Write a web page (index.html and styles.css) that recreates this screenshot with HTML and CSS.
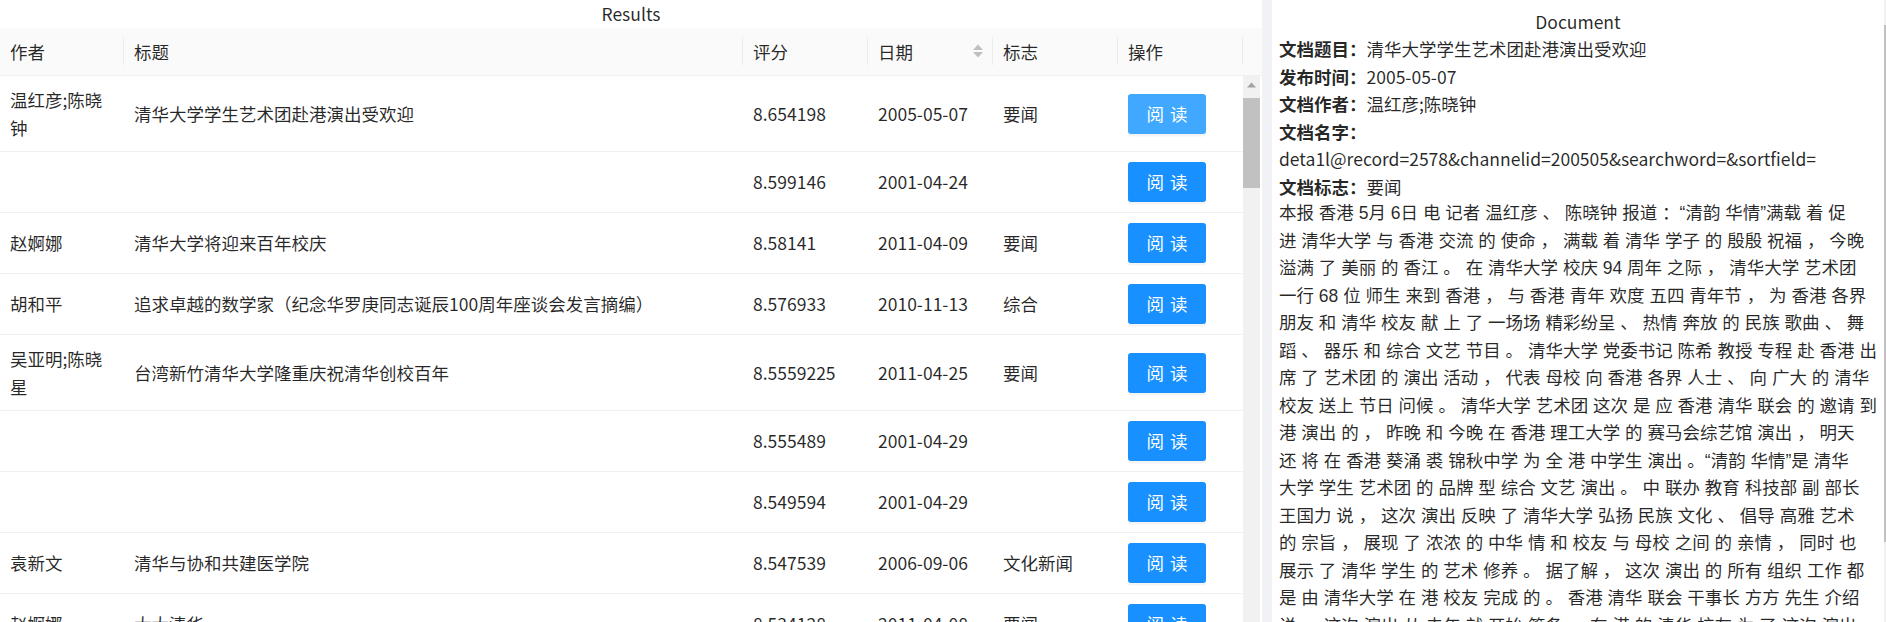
FILE: index.html
```html
<!DOCTYPE html>
<html lang="zh-CN">
<head>
<meta charset="utf-8">
<title>Results</title>
<link rel="stylesheet" href="styles.css">
</head>
<body>
<section class="results">
  <div class="panel-title">Results</div>
  <table class="thead">
    <colgroup><col class="c-author"><col class="c-title"><col class="c-std"><col class="c-std"><col class="c-std"><col class="c-std"><col></colgroup>
    <thead>
      <tr>
        <th class="sep">作者</th>
        <th class="sep">标题</th>
        <th class="sep">评分</th>
        <th class="sep"><div class="sorter"><span>日期</span>
          <svg class="carets" width="12" height="16" viewBox="0 0 12 16"><path d="M1 7 L6 1.6 L11 7 Z" fill="#bfbfbf"/><path d="M1 9 L6 14.4 L11 9 Z" fill="#bfbfbf"/></svg></div></th>
        <th class="sep">标志</th>
        <th class="sep">操作</th>
        <th></th>
      </tr>
    </thead>
  </table>
  <div class="tbody-wrap">
    <table class="tbody">
      <colgroup><col class="c-author"><col class="c-title"><col class="c-std"><col class="c-std"><col class="c-std"><col class="c-std"></colgroup>
      <tbody>
        <tr><td>温红彦;陈晓钟</td><td>清华大学学生艺术团赴港演出受欢迎</td><td>8.654198</td><td>2005-05-07</td><td>要闻</td><td><button class="btn hover"><span>阅读</span></button></td></tr>
        <tr><td></td><td></td><td>8.599146</td><td>2001-04-24</td><td></td><td><button class="btn"><span>阅读</span></button></td></tr>
        <tr><td>赵婀娜</td><td>清华大学将迎来百年校庆</td><td>8.58141</td><td>2011-04-09</td><td>要闻</td><td><button class="btn"><span>阅读</span></button></td></tr>
        <tr><td>胡和平</td><td>追求卓越的数学家（纪念华罗庚同志诞辰100周年座谈会发言摘编）</td><td>8.576933</td><td>2010-11-13</td><td>综合</td><td><button class="btn"><span>阅读</span></button></td></tr>
        <tr><td>吴亚明;陈晓星</td><td>台湾新竹清华大学隆重庆祝清华创校百年</td><td>8.5559225</td><td>2011-04-25</td><td>要闻</td><td><button class="btn"><span>阅读</span></button></td></tr>
        <tr><td></td><td></td><td>8.555489</td><td>2001-04-29</td><td></td><td><button class="btn"><span>阅读</span></button></td></tr>
        <tr><td></td><td></td><td>8.549594</td><td>2001-04-29</td><td></td><td><button class="btn"><span>阅读</span></button></td></tr>
        <tr><td>袁新文</td><td>清华与协和共建医学院</td><td>8.547539</td><td>2006-09-06</td><td>文化新闻</td><td><button class="btn"><span>阅读</span></button></td></tr>
        <tr><td>赵婀娜</td><td>大大清华</td><td>8.534128</td><td>2011-04-08</td><td>要闻</td><td><button class="btn"><span>阅读</span></button></td></tr>
      </tbody>
    </table>
    <div class="vbar">
      <div class="vbar-arrow"><svg width="9" height="6" viewBox="0 0 9 6"><path d="M0 5.5 L4.5 0.5 L9 5.5 Z" fill="#a3a3a3"/></svg></div>
      <div class="vbar-thumb"></div>
    </div>
  </div>
</section>

<section class="document">
  <div class="doc-content">
    <div class="doc-title">Document</div>
    <div class="field"><b>文档题目：</b>清华大学学生艺术团赴港演出受欢迎</div>
    <div class="field"><b>发布时间：</b>2005-05-07</div>
    <div class="field"><b>文档作者：</b>温红彦;陈晓钟</div>
    <div class="field"><b>文档名字：</b> deta1l@record=2578&amp;channelid=200505&amp;searchword=&amp;sortfield=</div>
    <div class="field"><b>文档标志：</b>要闻</div>
    <p class="doc-body">本报 香港 5月 6日 电 记者 温红彦 、 陈晓钟 报道 ：“清韵 华情”满载 着 促<br>进 清华大学 与 香港 交流 的 使命 ， 满载 着 清华 学子 的 殷殷 祝福 ， 今晚<br>溢满 了 美丽 的 香江 。 在 清华大学 校庆 94 周年 之际 ， 清华大学 艺术团<br>一行 68 位 师生 来到 香港 ， 与 香港 青年 欢度 五四 青年节 ， 为 香港 各界<br>朋友 和 清华 校友 献 上 了 一场场 精彩纷呈 、 热情 奔放 的 民族 歌曲 、 舞<br>蹈 、 器乐 和 综合 文艺 节目 。 清华大学 党委书记 陈希 教授 专程 赴 香港 出<br>席 了 艺术团 的 演出 活动 ， 代表 母校 向 香港 各界 人士 、 向 广大 的 清华<br>校友 送上 节日 问候 。 清华大学 艺术团 这次 是 应 香港 清华 联会 的 邀请 到<br>港 演出 的 ， 昨晚 和 今晚 在 香港 理工大学 的 赛马会综艺馆 演出 ， 明天<br>还 将 在 香港 葵涌 裘 锦秋中学 为 全 港 中学生 演出 。“清韵 华情”是 清华<br>大学 学生 艺术团 的 品牌 型 综合 文艺 演出 。 中 联办 教育 科技部 副 部长<br>王国力 说 ， 这次 演出 反映 了 清华大学 弘扬 民族 文化 、 倡导 高雅 艺术<br>的 宗旨 ， 展现 了 浓浓 的 中华 情 和 校友 与 母校 之间 的 亲情 ， 同时 也<br>展示 了 清华 学生 的 艺术 修养 。 据了解 ， 这次 演出 的 所有 组织 工作 都<br>是 由 清华大学 在 港 校友 完成 的 。 香港 清华 联会 干事长 方方 先生 介绍<br>说 ， 这次 演出 从 去年 就 开始 筹备 ， 在 港 的 清华 校友 为 了 这次 演出</p>
  </div>
  <div class="vbar doc-bar">
    <div class="vbar-arrow"><svg width="9" height="6" viewBox="0 0 9 6"><path d="M0 5.5 L4.5 0.5 L9 5.5 Z" fill="#505050"/></svg></div>
    <div class="vbar-thumb doc-thumb"></div>
  </div>
</section>
</body>
</html>
```

FILE: styles.css
```css
* { box-sizing: border-box; }

html, body {
  margin: 0;
  padding: 0;
}

body {
  height: 622px;
  overflow: hidden;
  display: flex;
  gap: 10px;
  background: #f0f2f5;
  font-family: "Noto Sans CJK SC", "Noto Sans", sans-serif;
  font-size: 17.5px;
  line-height: 27.5px;
  color: rgba(0, 0, 0, 0.85);
}

.results {
  flex: 0 0 1262px;
  display: flex;
  flex-direction: column;
  background: #fff;
  min-height: 0;
}

.panel-title {
  text-align: center;
  height: 27.5px;
}

table {
  border-collapse: collapse;
  table-layout: fixed;
  border-spacing: 0;
}

.c-author { width: 124px; }
.c-title { width: 619px; }
.c-std { width: 125px; }

.thead {
  width: 1262px;
  background: #fafafa;
}

.thead th {
  padding: 10px;
  text-align: left;
  font-weight: 400;
  border-bottom: 1px solid #f0f0f0;
  position: relative;
}

.thead th.sep::before {
  content: "";
  position: absolute;
  right: 0;
  top: 50%;
  width: 1px;
  height: 28px;
  transform: translateY(-50%);
  background: rgba(0, 0, 0, 0.06);
}

.sorter {
  display: flex;
  align-items: center;
  justify-content: space-between;
}

.carets {
  display: block;
  margin-right: -1px;
}

.tbody-wrap {
  flex: 1;
  min-height: 0;
  display: flex;
  overflow: hidden;
}

.tbody {
  width: 1243px;
  flex: 0 0 1243px;
  align-self: flex-start;
}

.tbody td {
  padding: 10px;
  border-bottom: 1px solid #f0f0f0;
  vertical-align: middle;
  overflow-wrap: anywhere;
}

.btn {
  display: flex;
  align-items: center;
  justify-content: center;
  width: 78px;
  height: 40px;
  padding: 0;
  border: 1px solid #1890ff;
  border-radius: 2.5px;
  background: #1890ff;
  color: #fff;
  font-family: inherit;
  font-size: 17.5px;
  line-height: 27.5px;
  box-shadow: 0 2.5px 0 rgba(0, 0, 0, 0.045);
  cursor: pointer;
}

.btn span {
  letter-spacing: 0.34em;
  margin-right: -0.34em;
}

.btn.hover {
  background: #40a9ff;
  border-color: #40a9ff;
}

.vbar {
  flex: 0 0 17px;
  width: 17px;
  background: #f1f1f1;
  display: flex;
  flex-direction: column;
  align-items: center;
}

.vbar-arrow {
  height: 17px;
  width: 17px;
  display: flex;
  align-items: center;
  justify-content: center;
}

.vbar-thumb {
  width: 17px;
  height: 90px;
  margin-top: 5px;
  background: #c1c1c1;
}

.document {
  flex: 0 0 623px;
  display: flex;
  background: #fff;
}

.doc-content {
  flex: 1;
  min-width: 0;
  height: 622px;
  overflow: hidden;
  padding: 7.75px 7px 0 7px;
}

.doc-title {
  text-align: center;
}

.field b {
  font-weight: 700;
}

.doc-body {
  margin: 0;
  white-space: nowrap;
  font-family: "Liberation Sans", "Noto Sans CJK SC", sans-serif;
}

.doc-bar .vbar-thumb {
  height: 517px;
  margin-top: 8px;
  background: #c1c1c1;
}
```
